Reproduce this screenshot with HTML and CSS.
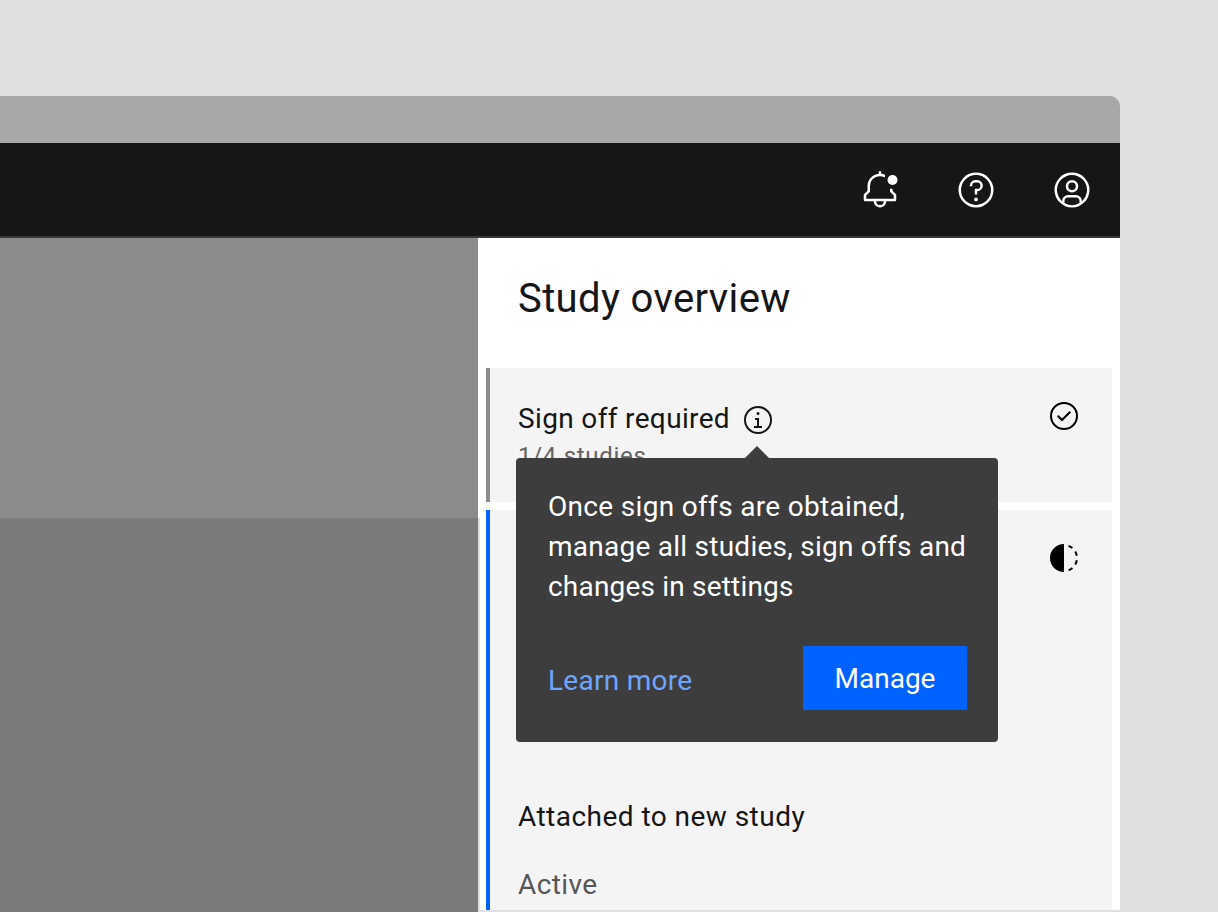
FILE: index.html
```html
<!DOCTYPE html>
<html lang="en">
<head>
<meta charset="utf-8">
<title>Study overview</title>
<link rel="stylesheet" href="styles.css">
</head>
<body>
<div class="window">
  <div class="titlebar"></div>
  <header class="header">
    <svg class="icon" viewBox="0 0 32 32"><path d="M28.707 19.293 26 16.586V15h-2v2a1 1 0 0 0 .293.707L27 20.414V23H5v-2.586l2.707-2.707A1 1 0 0 0 8 17v-4a7.985 7.985 0 0 1 12-6.918V3.847a9.896 9.896 0 0 0-3-.796V1h-2v2.051A10.014 10.014 0 0 0 6 13v3.586l-2.707 2.707A1 1 0 0 0 3 20v4a1 1 0 0 0 1 1h7a5 5 0 0 0 10 0h7a1 1 0 0 0 1-1v-4a1 1 0 0 0-.293-.707ZM16 28a3 3 0 0 1-3-3h6a3 3 0 0 1-3 3Z"/><circle cx="26" cy="8" r="4"/></svg>
    <svg class="icon" viewBox="0 0 32 32"><path d="M16 2a14 14 0 1 0 14 14A14 14 0 0 0 16 2Zm0 26a12 12 0 1 1 12-12 12 12 0 0 1-12 12Z"/><circle cx="16" cy="23.5" r="1.5"/><path d="M17 8h-1.500A4.490 4.490 0 0 0 11 12.500V13h2v-.5A2.500 2.500 0 0 1 15.500 10H17a2.500 2.500 0 0 1 0 5h-2v4.500h2V17a4.500 4.500 0 0 0 0-9Z"/></svg>
    <svg class="icon" viewBox="0 0 32 32"><path d="M16 8a5 5 0 1 0 5 5 5 5 0 0 0-5-5Zm0 8a3 3 0 1 1 3-3 3 3 0 0 1-3 3Z"/><path d="M16 2a14 14 0 1 0 14 14A14.016 14.016 0 0 0 16 2ZM10 26.377V25a3 3 0 0 1 3-3h6a3 3 0 0 1 3 3v1.377a11.899 11.899 0 0 1-12 0Zm13.993-1.451A5 5 0 0 0 19 20h-6a5 5 0 0 0-4.993 4.926 12 12 0 1 1 15.985 0Z"/></svg>
  </header>
  <div class="body">
    <div class="workspace">
      <div class="workspace-upper"></div>
      <div class="workspace-lower"></div>
    </div>
    <aside class="panel">
      <h1 class="panel-title">Study overview</h1>
      <section class="card card-pending">
        <div class="card-text">
          <div class="card-heading">
            <span class="label-signoff">Sign off required</span>
            <svg class="icon-small" viewBox="0 0 32 32"><path d="M17 22v-8h-4v2h2v6h-3v2h8v-2zM16 8a1.500 1.500 0 1 0 1.500 1.500A1.500 1.500 0 0 0 16 8Z"/><path d="M16 30a14 14 0 1 1 14-14 14 14 0 0 1-14 14Zm0-26a12 12 0 1 0 12 12A12 12 0 0 0 16 4Z"/></svg>
          </div>
          <div class="card-count">1/4 studies</div>
        </div>
        <svg class="icon-small status" viewBox="0 0 32 32"><path d="m14 21.414-5-5.001L10.413 15 14 18.586 21.585 11 23 12.415l-9 8.999z"/><path d="M16 2a14 14 0 1 0 14 14A14 14 0 0 0 16 2Zm0 26a12 12 0 1 1 12-12 12 12 0 0 1-12 12Z"/></svg>
        <div class="tooltip">
          <p class="tooltip-text"><span class="line-one">Once sign offs are obtained,</span><br><span class="line-two">manage all studies, sign offs and</span><br><span class="line-three">changes in settings</span></p>
          <div class="tooltip-actions">
            <a class="learn">Learn more</a>
            <button class="manage">Manage</button>
          </div>
        </div>
      </section>
      <section class="card card-active">
        <div class="card-text card-text-end">
          <div class="attached">Attached to new study</div>
          <div class="state">Active</div>
        </div>
        <svg class="icon-small status" viewBox="0 0 32 32"><path d="m23.764 6.859 1.285-1.531a13.976 13.976 0 0 0-4.182-2.441l-.683 1.878a11.973 11.973 0 0 1 3.580 2.094zM27.810 14l1.968-.413a13.889 13.889 0 0 0-1.638-4.541L26.409 10a12.520 12.520 0 0 1 1.401 4zM20.184 27.235l.683 1.878a13.976 13.976 0 0 0 4.182-2.441l-1.285-1.532a11.973 11.973 0 0 1-3.580 2.095zM26.409 22l1.731 1a14.140 14.140 0 0 0 1.638-4.587l-1.968-.347A12.152 12.152 0 0 1 26.409 22zM16 30V2a14 14 0 0 0 0 28z"/></svg>
      </section>
      <div class="panel-end"></div>
    </aside>
  </div>
</div>
</body>
</html>
```
FILE: styles.css
```css
* { box-sizing: border-box; }
body {
  margin: 0;
  height: 912px;
  padding-top: 96px;
  overflow: hidden;
  background: #e0e0e0;
  color: #161616;
  font-family: Roboto, "Liberation Sans", sans-serif;
  font-size: 28px;
  font-weight: 400;
  line-height: 40px;
}
.window { width: 1120px; height: 816px; display: flex; flex-direction: column; }
.titlebar { height: 47px; background: #a8a8a8; border-radius: 0 10px 0 0; }
.header {
  height: 95px;
  padding: 0 28px 0 0;
  display: flex;
  align-items: center;
  justify-content: flex-end;
  gap: 56px;
  background: #161616;
  border-bottom: 2px solid #393939;
}
.icon { width: 40px; height: 40px; fill: #fff; }
.icon-small { width: 32px; height: 32px; flex: none; fill: #161616; }
.body { flex: 1; display: flex; }
.workspace { width: 478px; display: flex; flex-direction: column; }
.workspace-upper { height: 280px; background: #8b8b8b; }
.workspace-lower { flex: 1; background: #7b7b7b; }
.panel {
  width: 642px;
  display: flex;
  flex-direction: column;
  background: linear-gradient(#e0e0e0, #e0e0e0) 0 280px / 2px 100% no-repeat #fff;
}
.panel-title {
  margin: 37px 0 45px 40px;
  font-size: 40px;
  line-height: 48px;
  font-weight: inherit;
  letter-spacing: 0.38px;
}
.card {
  position: relative;
  width: 626px;
  margin-left: 8px;
  display: flex;
  justify-content: space-between;
  background: #f4f4f4;
  border-left: 4px solid;
}
.card-pending { height: 134px; border-color: #8d8d8d; }
.card-active { height: 400px; margin-top: 8px; border-color: #0062ff; }
.card-text { padding: 31px 0 0 28px; white-space: nowrap; }
.card-heading { display: flex; align-items: center; gap: 12px; }
.card-heading .icon-small { margin-top: 2px; }
.card-count { font-size: 24px; line-height: 32px; margin-top: 1px; color: #636363; letter-spacing: 0.7px; }
.status { margin: 32px 32px 0 0; fill: #000; }
.label-signoff { width: 212px; letter-spacing: 0.35px; }
.tooltip {
  position: absolute;
  z-index: 1;
  top: 90px;
  left: 26px;
  width: 482px;
  height: 284px;
  padding: 29px 31px 32px 32px;
  display: flex;
  flex-direction: column;
  justify-content: space-between;
  background: #3d3d3d;
  border-radius: 4px;
  color: #fff;
}
.tooltip::before {
  content: "";
  position: absolute;
  top: -12px;
  left: 229px;
  border: solid transparent;
  border-width: 0 12px 12px;
  border-bottom-color: #3d3d3d;
}
.tooltip-text { margin: 0; white-space: nowrap; }
.line-one { letter-spacing: 0.32px; }
.line-two { letter-spacing: 0.25px; }
.line-three { letter-spacing: 0.19px; }
.tooltip-actions { display: flex; justify-content: space-between; }
.learn { color: #6ea6ff; line-height: 70px; height: 64px; letter-spacing: 0.27px; }
.manage {
  width: 164px;
  height: 64px;
  border: 0;
  padding: 2px 0 0;
  background: #0062ff;
  color: #fff;
  font: inherit;
  letter-spacing: 0;
}
.card-text-end { padding-top: 287px; }
.attached { letter-spacing: 0.46px; }
.state { margin-top: 28px; color: #565656; letter-spacing: 0.38px; }
.panel-end { height: 2px; margin-left: 2px; background: #e0e0e0; }
```
